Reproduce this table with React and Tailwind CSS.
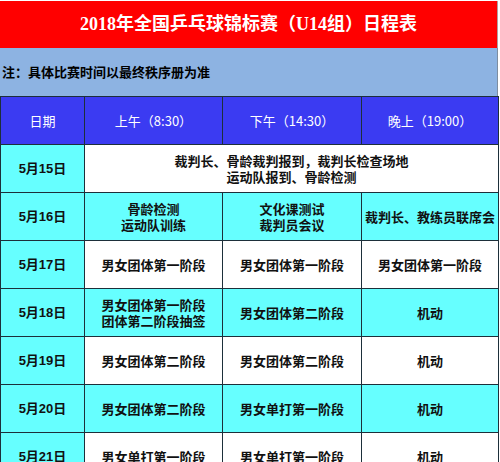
import React from 'react'

const rows = [
  { date: '5月15日', merged: ['裁判长、骨龄裁判报到，裁判长检查场地', '运动队报到、骨龄检测'] },
  { date: '5月16日', cells: [['骨龄检测', '运动队训练'], ['文化课测试', '裁判员会议'], ['裁判长、教练员联席会']] },
  { date: '5月17日', cells: [['男女团体第一阶段'], ['男女团体第一阶段'], ['男女团体第一阶段']] },
  { date: '5月18日', cells: [['男女团体第一阶段', '团体第二阶段抽签'], ['男女团体第二阶段'], ['机动']] },
  { date: '5月19日', cells: [['男女团体第二阶段'], ['男女团体第二阶段'], ['机动']] },
  { date: '5月20日', cells: [['男女团体第二阶段'], ['男女单打第一阶段'], ['机动']] },
  { date: '5月21日', cells: [['男女单打第一阶段'], ['男女单打第一阶段'], ['机动']] },
]

const cell = 'border border-[#1d2f3a] text-center align-middle p-0 leading-[16px]'

function Lines({ lines }) {
  return lines.map((l, i) => <div key={i}>{l}</div>)
}

export default function App() {
  return (
    <div className="w-[500px] h-[462px] overflow-hidden bg-white font-['Noto_Sans_CJK_SC',sans-serif]">
      <div className="w-[498px] mt-px h-[47px] bg-[#ff0000] flex items-center justify-center text-white font-bold text-[18px] font-['Liberation_Serif','Noto_Sans_CJK_SC',serif] border-r border-[#b0a0a0]">
        2018年全国乒乓球锦标赛（U14组）日程表
      </div>
      <div className="w-[498px] h-[48px] bg-[#8db3e2] flex items-center pl-[2px] text-[13px] font-bold text-black border-r border-[#7d8da0]">
        注：具体比赛时间以最终秩序册为准
      </div>
      <table className="border-collapse table-fixed w-[498px] text-[13px] font-bold text-[#111]">
        <colgroup>
          <col className="w-[84px]" />
          <col className="w-[138px]" />
          <col className="w-[139px]" />
          <col className="w-[137px]" />
        </colgroup>
        <tbody>
          <tr className="h-[48px] bg-[#3b3bf2] text-white font-normal">
            <td className={cell}>日期</td>
            <td className={cell}>上午（8:30）</td>
            <td className={cell}>下午（14:30）</td>
            <td className={cell}>晚上（19:00）</td>
          </tr>
          {rows.map((r, i) => {
            const bg = i % 2 === 1 ? 'bg-[#66ffff]' : 'bg-white'
            return (
              <tr key={r.date} className="h-[48px]">
                <td className={`${cell} bg-[#66ffff] font-['Liberation_Sans','Noto_Sans_CJK_SC',sans-serif]`}>{r.date}</td>
                {r.merged ? (
                  <td colSpan={3} className={`${cell} ${bg}`}>
                    <Lines lines={r.merged} />
                  </td>
                ) : (
                  r.cells.map((c, j) => (
                    <td key={j} className={`${cell} ${bg}`}>
                      <Lines lines={c} />
                    </td>
                  ))
                )}
              </tr>
            )
          })}
        </tbody>
      </table>
    </div>
  )
}
